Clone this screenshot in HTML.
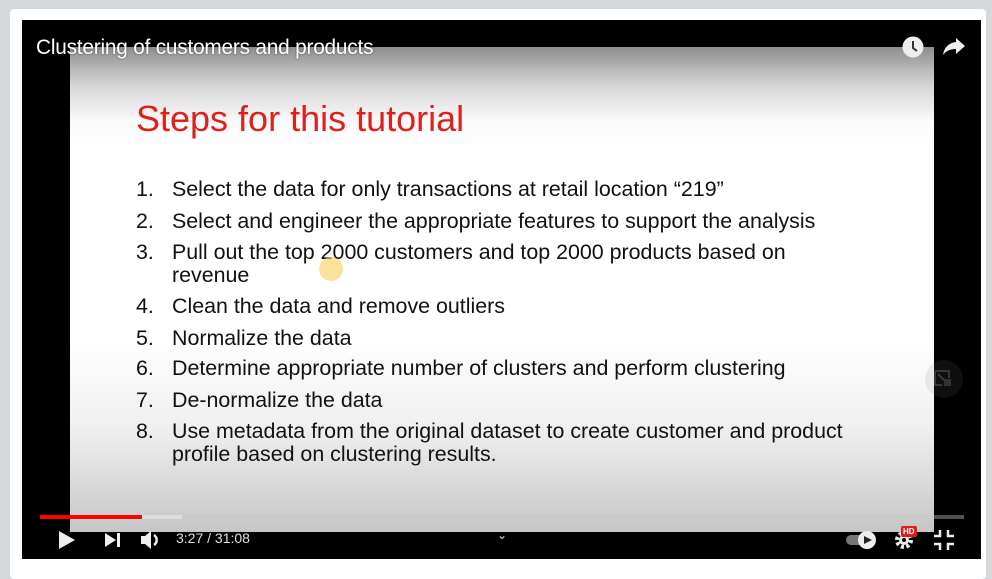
<!DOCTYPE html>
<html><head><style>
body{margin:0;width:992px;height:566px;background:#d5d8db;position:relative;overflow:hidden;font-family:"Liberation Sans",sans-serif}
.card{position:absolute;left:10px;top:9px;width:976px;height:570px;background:#fff;border-radius:4px}
.vid{position:absolute;left:22px;top:20px;width:959px;height:539px;background:#000;overflow:hidden}
.slide{position:absolute;left:48px;top:27px;width:864px;height:485px;background:linear-gradient(to bottom,#8e8e8e 0px,#d8d8d8 40px,#fafafa 75px,#fff 100px,#fff 290px,#f0f0f0 380px,#c6c6c6 485px)}
.title{position:absolute;left:14px;top:16px;color:#fff;font-size:20.8px;letter-spacing:-0.2px;text-shadow:0 0 2px rgba(0,0,0,.5)}
.h{position:absolute;left:66px;top:51px;color:#e0201c;font-size:36px}
.li{position:absolute;left:66px;font-size:21.4px;color:#111;line-height:23px;white-space:nowrap}
.li span{display:inline-block;width:36px}
.li .c{display:inline-block;vertical-align:top}
.bar{position:absolute;top:495px;height:4px}
.t{position:absolute;left:154px;top:510px;color:#ddd;font-size:14px}
</style></head><body>
<div class="card"></div>
<div class="vid">
<div class="slide">
<div class="h">Steps for this tutorial</div>
<div class="li" style="top:131px"><span>1.</span>Select the data for only transactions at retail location “219”</div>
<div class="li" style="top:163px"><span>2.</span>Select and engineer the appropriate features to support the analysis</div>
<div class="li" style="top:194px"><span>3.</span><div class="c">Pull out the top 2000 customers and top 2000 products based on<br>revenue</div></div>
<div class="li" style="top:248px"><span>4.</span>Clean the data and remove outliers</div>
<div class="li" style="top:280px"><span>5.</span>Normalize the data</div>
<div class="li" style="top:310px"><span>6.</span>Determine appropriate number of clusters and perform clustering</div>
<div class="li" style="top:342px"><span>7.</span>De-normalize the data</div>
<div class="li" style="top:373px"><span>8.</span><div class="c">Use metadata from the original dataset to create customer and product<br>profile based on clustering results.</div></div>
<div style="position:absolute;left:249px;top:210px;width:24px;height:24px;border-radius:50%;background:rgba(250,205,90,.6)"></div>
</div>
<div class="title">Clustering of customers and products</div>
<svg style="position:absolute;left:880px;top:16px" width="22" height="22" viewBox="0 0 22 22"><circle cx="11" cy="11" r="10.5" fill="#eee"/><path d="M11 5v7l4 3" stroke="#333" stroke-width="2" fill="none"/></svg>
<svg style="position:absolute;left:920px;top:16px" width="24" height="20" viewBox="0 0 24 20"><path d="M14 2l9 8-9 8v-5c-6 0-10 2-13 6 1-7 5-12 13-13z" fill="#eee"/></svg>
<div class="bar" style="left:18px;width:924px;background:rgba(200,200,200,.4)"></div>
<div class="bar" style="left:18px;width:142px;background:#ddd"></div>
<div class="bar" style="left:18px;width:102px;background:#f00"></div>
<svg style="position:absolute;left:36px;top:510px" width="18" height="20"><path d="M1 1l16 9-16 9z" fill="#eee"/></svg>
<svg style="position:absolute;left:82px;top:511px" width="18" height="18"><path d="M1 2l11 7-11 7z" fill="#eee"/><rect x="13" y="2" width="3" height="14" fill="#eee"/></svg>
<svg style="position:absolute;left:118px;top:509px" width="22" height="22"><path d="M1 7h4l6-5v18l-6-5h-4z" fill="#eee"/><path d="M14 6a6 6 0 0 1 0 10" stroke="#eee" stroke-width="2.5" fill="none"/></svg>
<div class="t">3:27 / 31:08</div>
<div style="position:absolute;left:475px;top:508px;color:#ddd;font-size:12px">&#8964;</div>
<div style="position:absolute;left:824px;top:515px;width:24px;height:10px;border-radius:5px;background:#777"></div>
<div style="position:absolute;left:836px;top:511px;width:18px;height:18px;border-radius:50%;background:#eee"></div>
<svg style="position:absolute;left:841px;top:515px" width="10" height="10"><path d="M1 1l8 4-8 4z" fill="#222"/></svg>
<svg style="position:absolute;left:872px;top:510px" width="20" height="20" viewBox="0 0 20 20"><circle cx="10" cy="10" r="7" fill="none" stroke="#eee" stroke-width="4" stroke-dasharray="3 2.5"/><circle cx="10" cy="10" r="5" fill="#eee"/><circle cx="10" cy="10" r="2" fill="#000"/></svg>
<div style="position:absolute;left:879px;top:506px;background:#e21b1b;color:#fff;font-size:8px;font-weight:bold;padding:1px 2px;border-radius:2px">HD</div>
<svg style="position:absolute;left:911px;top:509px" width="22" height="22"><path d="M7 1v6h-6M15 1v6h6M7 21v-6h-6M15 21v-6h6" stroke="#eee" stroke-width="2.5" fill="none"/></svg>
<div style="position:absolute;left:903px;top:340px;width:38px;height:38px;border-radius:50%;background:rgba(120,120,120,.12)"></div>
<svg style="position:absolute;left:911px;top:349px" width="24" height="20"><path d="M2 2h14v7M2 2v14h7M5 5l6 6" stroke="#444" stroke-width="1.5" fill="none"/><rect x="11" y="10" width="7" height="7" fill="#333"/></svg>
</div>
</body></html>
